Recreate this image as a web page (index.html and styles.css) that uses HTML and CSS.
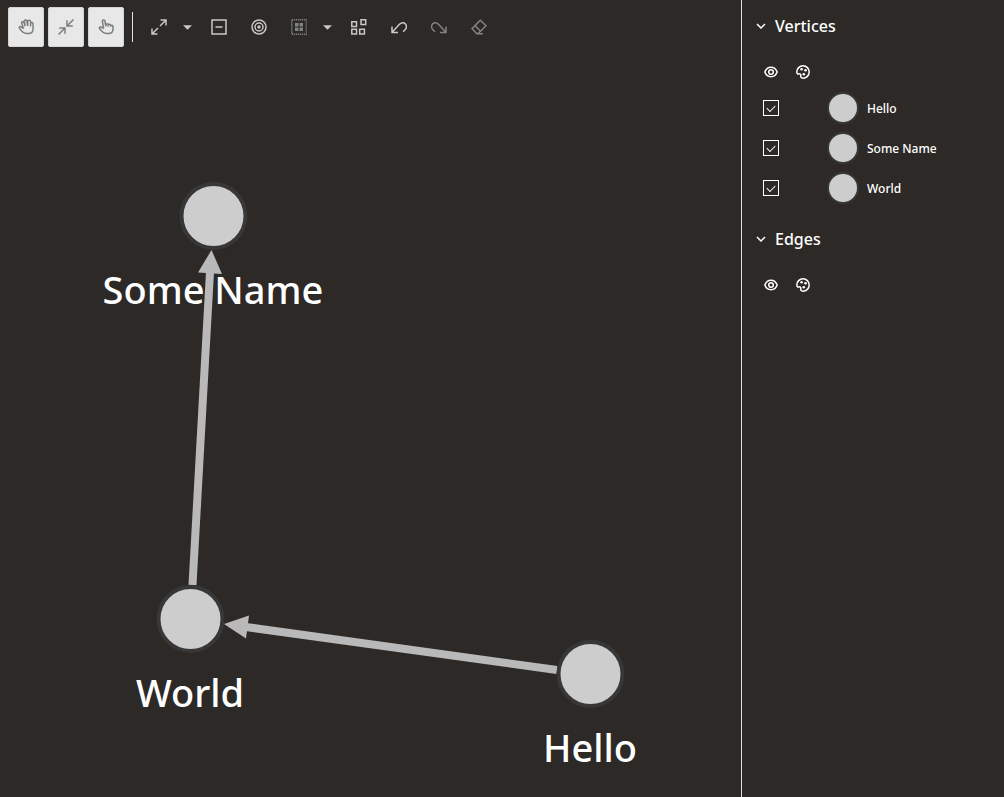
FILE: index.html
```html
<!DOCTYPE html>
<html lang="en">
<head>
    <meta charset="UTF-8">
    <meta name="viewport" content="width=device-width, initial-scale=1.0">
    <title>Graph Visualization</title>
    <link rel="stylesheet" href="styles.css">
</head>
<body>
    <!-- Shared icons -->
    <svg class="sprite" aria-hidden="true">
        <symbol id="icon-chevron" viewBox="0 0 10 6">
            <path d="M1 1l4 4 4-4"/>
        </symbol>
        <symbol id="icon-eye" viewBox="0 0 14 14">
            <path d="M.8 7C2 4 4.300 2.300 7 2.300S12 4 13.200 7C12 10 9.700 11.700 7 11.700S2 10 .8 7z"/>
            <circle cx="7" cy="7" r="2.300"/>
        </symbol>
        <symbol id="icon-palette" viewBox="0 0 14 14">
            <path d="M7 .8a6.200 6.200 0 1 1 0 12.400c-1.700 0-2.400-.9-2.200-2.100.3-1.600-.5-2.500-1.900-2.200C1.600 9.200.8 8.400.8 7A6.200 6.200 0 0 1 7 .8z"/>
            <circle class="dot" cx="5.600" cy="4.200" r="1.300"/>
            <circle class="dot" cx="9.500" cy="5.200" r="1.300"/>
            <circle class="dot" cx="7.800" cy="9.300" r="1.300"/>
        </symbol>
    </svg>

    <main class="stage">
        <div class="toolbar">
            <button class="mode" aria-label="Move">
                <svg class="icon" viewBox="0 0 16 16"><path d="M5.100 9.500L3.300 7.800C2.300 6.900.8 7.900 1.500 9.100c.8 1.500 1.900 2.800 3.200 3.900C5.800 14 7 14.600 9 14.600h1.300c2.800 0 4.700-1.700 4.700-4.300V4.800a1.100 1.100 0 0 0-2.300-.1M5.600 9.800L3.700 4.200a1.150 1.150 0 0 1 2.200-.8L7.200 7.200M7.200 7.200L6.400 2.400a1.250 1.250 0 0 1 2.500-.3L9.700 7M9.700 7V2.700a1.400 1.400 0 0 1 2.900 0V7.500"/></svg>
            </button>
            <button class="mode" aria-label="Fit to screen">
                <svg class="icon" viewBox="0 0 16 16"><path d="M15.500.5L9.500 6.500M9 1.200V7h5.800M.5 15.500l6-6M1.200 9H7v5.800"/></svg>
            </button>
            <button class="mode" aria-label="Sticky mode">
                <svg class="icon" viewBox="0 0 16 16"><path d="M5.600 9.500L3.300 8.100C2.100 7.400.8 8.600 1.700 9.700c.9 1.200 1.900 2.300 3 3.300 1.100 1.100 2.300 1.600 4.300 1.600h1.300c2.800 0 4.700-1.700 4.700-4.300V7.500a1.100 1.100 0 0 0-2.300 0M5.600 9.500L4.400 2.500a1.250 1.250 0 0 1 2.500-.5l.9 5.200M7.800 7.500V6a1.200 1.200 0 0 1 2.400 0v1.500M10.200 7.500v-1a1.250 1.250 0 0 1 2.500 0v1.200"/></svg>
            </button>
            <span class="separator"></span>
            <button aria-label="Expand">
                <svg class="icon" viewBox="0 0 16 16"><path d="M9.500 1H15v5.500M15 1L9 7M6.500 15H1V9.500M1 15l6-6"/></svg>
            </button>
            <button class="drop" aria-label="Expand options">
                <svg viewBox="0 0 10 5"><path d="M0 0h10L5 5z"/></svg>
            </button>
            <button aria-label="Drop">
                <svg class="icon" viewBox="0 0 16 16"><path d="M1 1h14v14H1zM4.500 8h7"/></svg>
            </button>
            <button aria-label="Focus">
                <svg class="icon" viewBox="0 0 16 16"><circle cx="8" cy="8" r="7"/><circle cx="8" cy="8" r="4"/><circle class="solid" cx="8" cy="8" r="1.700"/></svg>
            </button>
            <button class="dim" aria-label="Group">
                <svg class="icon" viewBox="0 0 16 16"><path stroke-dasharray="1.200 .8" d="M.8.8h14.400v14.400H.8z"/><path class="solid" d="M4 4h3.500v3.500H4zM8.500 4H12v3.500H8.500zM4 8.500h3.500V12H4zM8.500 8.500H12V12H8.500z"/></svg>
            </button>
            <button class="drop" aria-label="Group options">
                <svg viewBox="0 0 10 5"><path d="M0 0h10L5 5z"/></svg>
            </button>
            <button aria-label="Ungroup">
                <svg class="icon" viewBox="0 0 16 16"><path d="M.8 2.700h4.700v4.700H.8zM10 .8h4.700v4.700H10zM.8 10.200h4.700v4.700H.8zM8.700 10.200h4.700v4.700H8.700z"/></svg>
            </button>
            <button aria-label="Undo">
                <svg class="icon" viewBox="0 0 16 16"><path d="M1 7.500v6h6M1.200 13.200L8.200 5.600c2-2.100 4.500-2.400 6-.8 1.500 1.600 1.500 4 .1 5.600l-2.200 2.400"/></svg>
            </button>
            <button class="dim" aria-label="Redo">
                <svg class="icon" viewBox="0 0 16 16"><path d="M15 7.500v6H9M14.800 13.200L7.800 5.600c-2-2.100-4.500-2.400-6-.8-1.500 1.600-1.500 4-.1 5.600l2.200 2.400"/></svg>
            </button>
            <button class="dim" aria-label="Clear">
                <svg class="icon" viewBox="0 0 16 16"><path d="M9.300 1.200L15 6.800 7.200 14.600H5.600L1 9.600zM4 6.600l5.600 5.600M5.600 14.800H12"/></svg>
            </button>
        </div>

        <svg class="graph" role="img" aria-label="Graph">
            <g class="labels">
                <text x="213" y="304">Some Name</text>
                <text x="190" y="707">World</text>
                <text x="590" y="762">Hello</text>
            </g>
            <g class="edges">
                <path d="M192.500 585L210 272"/>
                <path d="M557 670L246 627"/>
                <polygon points="211.500,250 198,272.500 222,274"/>
                <polygon points="224,624 249,615.500 246,638.500"/>
            </g>
            <g class="nodes">
                <circle cx="213.500" cy="216" r="32"/>
                <circle cx="190.500" cy="619" r="32"/>
                <circle cx="590.500" cy="674" r="32"/>
            </g>
        </svg>
    </main>

    <aside class="legend">
        <details open>
            <summary><svg class="chevron"><use href="#icon-chevron"/></svg>Vertices</summary>
            <div class="legend-head">
                <svg><use href="#icon-eye"/></svg>
                <svg><use href="#icon-palette"/></svg>
            </div>
            <label class="legend-row">
                <input type="checkbox" checked>
                <span class="swatch"></span>
                <span>Hello</span>
            </label>
            <label class="legend-row">
                <input type="checkbox" checked>
                <span class="swatch"></span>
                <span>Some Name</span>
            </label>
            <label class="legend-row">
                <input type="checkbox" checked>
                <span class="swatch"></span>
                <span>World</span>
            </label>
        </details>
        <details open>
            <summary><svg class="chevron"><use href="#icon-chevron"/></svg>Edges</summary>
            <div class="legend-head">
                <svg><use href="#icon-eye"/></svg>
                <svg><use href="#icon-palette"/></svg>
            </div>
        </details>
    </aside>
</body>
</html>
```
FILE: styles.css
```css
* {
    box-sizing: border-box;
}
body {
    display: flex;
    min-height: 100vh;
    margin: 0;
    background-color: #2c2927;
    color: #fff;
    font-family: "Noto Sans", "Open Sans", sans-serif;
}
svg {
    fill: none;
    stroke: currentColor;
}
.sprite {
    position: absolute;
    width: 0;
    height: 0;
}
.stage {
    position: relative;
    flex: 1;
    min-width: 0;
}

/* Toolbar */
.toolbar {
    position: relative;
    z-index: 1;
    display: flex;
    align-items: center;
    gap: 4px;
    padding: 7px 8px;
}
.toolbar button {
    display: flex;
    align-items: center;
    justify-content: center;
    width: 36px;
    height: 40px;
    padding: 0;
    border: 0;
    border-radius: 2px;
    background: none;
    color: #c8c8c8;
    cursor: pointer;
}
.toolbar .mode {
    border: 1px solid #d4d4d4;
    background-color: #e8e8e8;
    color: #7c7f80;
}
.toolbar .dim {
    color: #808384;
}
.toolbar .drop {
    width: 12px;
    margin-right: 4px;
}
.drop svg {
    width: 9px;
    height: 5px;
    fill: currentColor;
    stroke: none;
}
.icon {
    width: 16px;
    height: 16px;
    stroke-width: 1.5;
}
.icon .solid {
    fill: currentColor;
    stroke: none;
}
.separator {
    width: 1px;
    height: 30px;
    margin: 0 4px;
    background-color: #e4e1dd;
}

/* Graph */
.graph {
    position: absolute;
    top: 0;
    left: 0;
    width: 100%;
    height: 100%;
}
.labels {
    fill: #fff;
    stroke: none;
    font-size: 38px;
    font-weight: 500;
    text-anchor: middle;
}
.edges path {
    stroke: #b9b9b9;
    stroke-width: 8;
}
.edges polygon {
    fill: #b9b9b9;
    stroke: none;
}
.nodes circle {
    fill: #cdcdcd;
    stroke: #373737;
    stroke-width: 4;
}

/* Legend */
.legend {
    width: 263px;
    border-left: 1px solid #e4e1dd;
}
details {
    margin-bottom: 5px;
}
summary {
    display: flex;
    align-items: center;
    gap: 9px;
    height: 52px;
    margin-bottom: 4px;
    padding-left: 14px;
    font-size: 16px;
    font-weight: 500;
    list-style: none;
    cursor: pointer;
}
.chevron {
    width: 10px;
    height: 6px;
    stroke-width: 1.5;
}
.legend-head {
    display: flex;
    align-items: center;
    gap: 18px;
    height: 32px;
    padding-left: 22px;
}
.legend-head svg {
    width: 14px;
    height: 14px;
    stroke-width: 1.5;
}
.dot {
    fill: currentColor;
    stroke: none;
}
.legend-row {
    display: flex;
    align-items: center;
    height: 40px;
    padding-left: 21px;
    font-size: 12px;
    font-weight: 500;
}
.legend-row input {
    appearance: none;
    width: 16px;
    height: 16px;
    margin: 0 48px 0 0;
    border: 1px solid #fff;
    display: grid;
    place-items: center;
}
.legend-row input:checked::before {
    content: "";
    width: 7px;
    height: 4px;
    margin-bottom: 2px;
    border-left: 1px solid #fff;
    border-bottom: 1px solid #fff;
    transform: rotate(-45deg);
}
.swatch {
    width: 32px;
    height: 32px;
    margin-right: 8px;
    border: 2px solid #363737;
    border-radius: 50%;
    background-color: #cdcdcd;
}
```
